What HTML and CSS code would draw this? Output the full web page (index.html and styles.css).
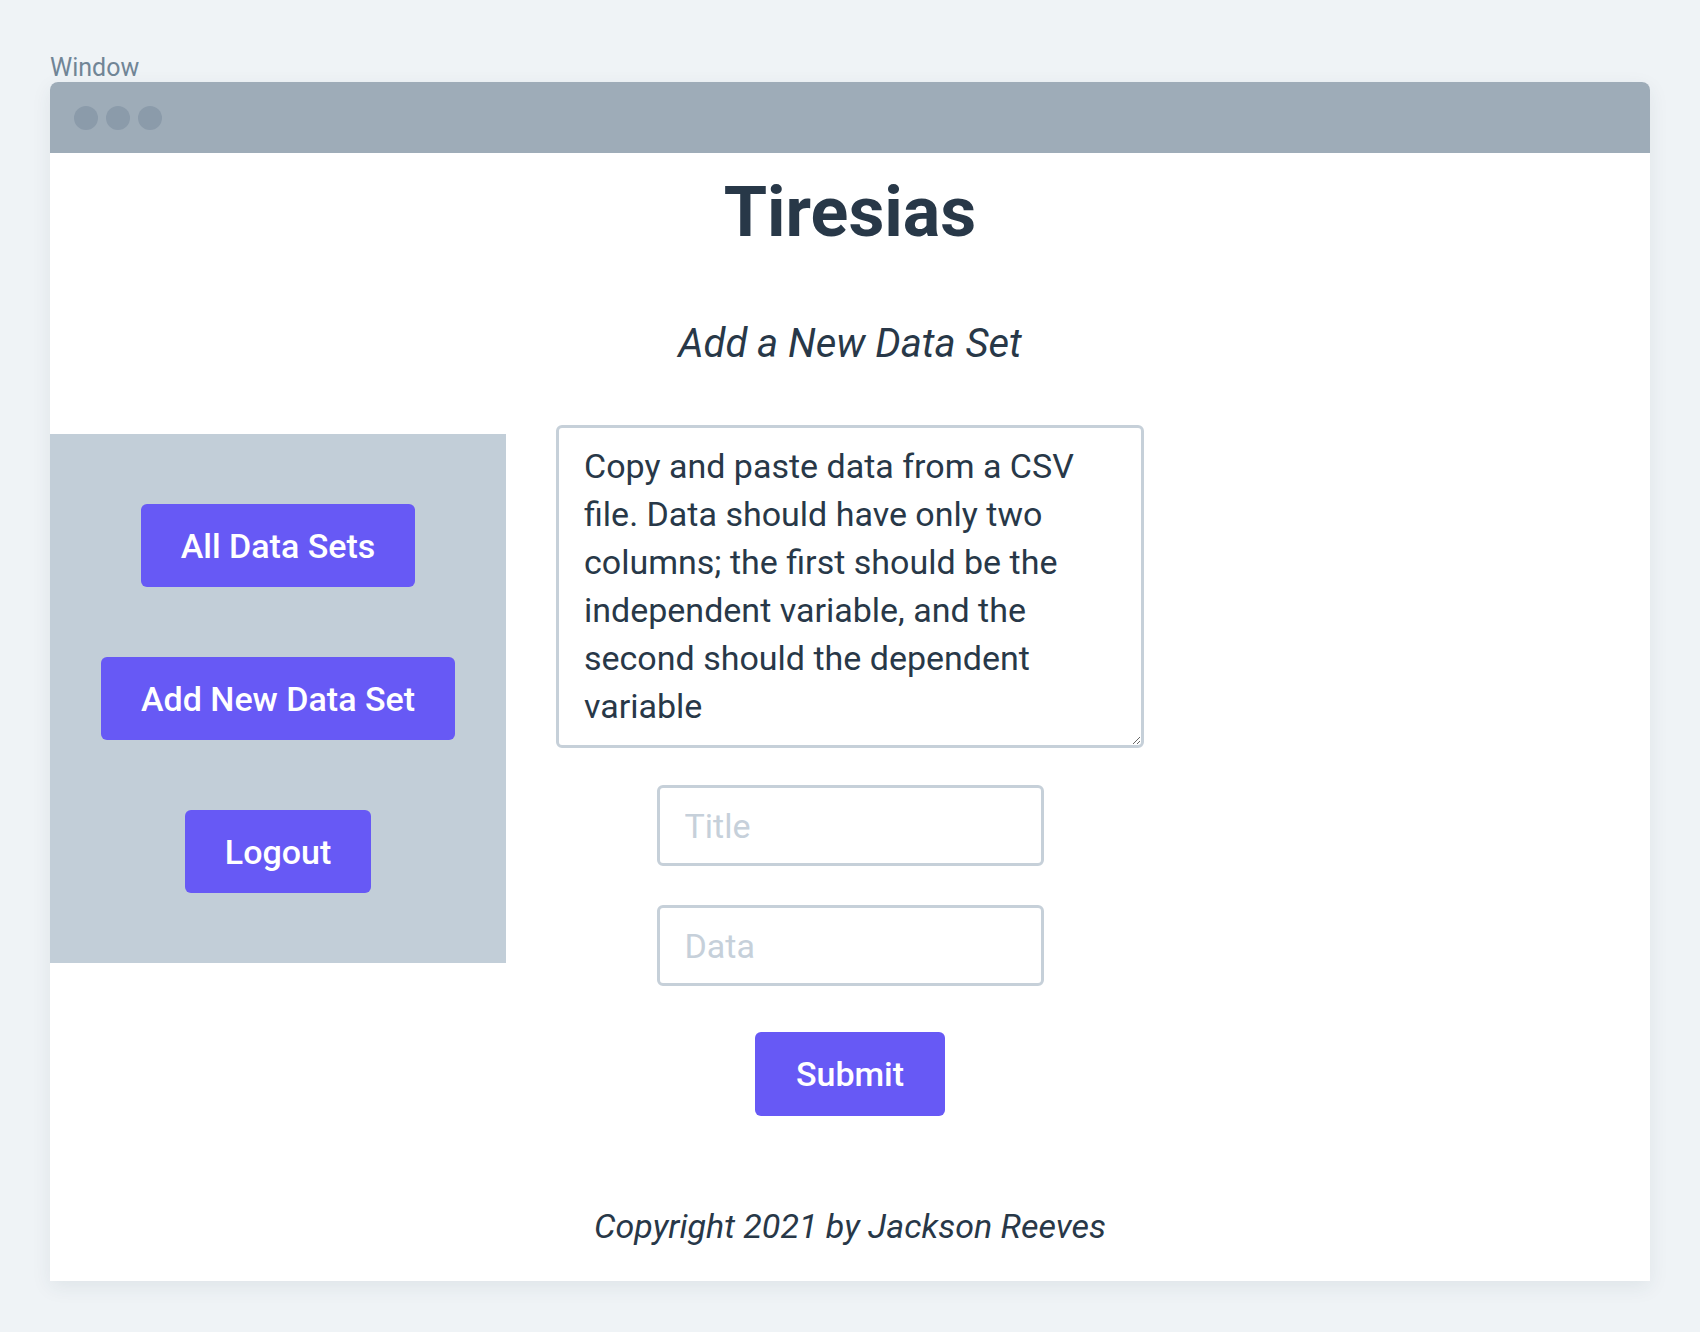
FILE: index.html
```html
<!DOCTYPE html>
<html lang="en">
<head>
<meta charset="utf-8">
<title>Tiresias</title>
<link rel="stylesheet" href="styles.css">
</head>
<body>
<div class="page">
  <div class="label">Window</div>
  <div class="window">
    <div class="titlebar">
      <span class="dot"></span><span class="dot"></span><span class="dot"></span>
    </div>
    <div class="content">
      <h1 class="title">Tiresias</h1>
      <h2 class="subtitle">Add a New Data Set</h2>
      <div class="main">
        <nav class="sidebar">
          <button class="btn">All Data Sets</button>
          <button class="btn">Add New Data Set</button>
          <button class="btn">Logout</button>
        </nav>
        <form class="form">
          <textarea class="area">Copy and paste data from a CSV file. Data should have only two columns; the first should be the independent variable, and the second should the dependent variable</textarea>
          <input class="field field-title" type="text" placeholder="Title">
          <input class="field field-data" type="text" placeholder="Data">
          <button class="btn submit" type="button">Submit</button>
        </form>
      </div>
      <footer class="footer">Copyright 2021 by Jackson Reeves</footer>
    </div>
  </div>
</div>
</body>
</html>
```
FILE: styles.css
```css
* { box-sizing: border-box; }
html, body { margin: 0; padding: 0; }
body {
  background: #eff3f6;
  font-family: Roboto, "Noto Sans", sans-serif;
  color: #283848;
  width: 1700px;
  height: 1332px;
  overflow: hidden;
}
.page {
  padding: 55px 50px 0;
}
.label {
  font-size: 25px;
  line-height: 25px;
  height: 25px;
  color: #718596;
  margin-bottom: 2px;
}
.window {
  width: 1600px;
  background: #ffffff;
  border-radius: 8px 8px 0 0;
  box-shadow: 0 6px 20px rgba(40, 60, 80, 0.08);
}
.titlebar {
  height: 71px;
  background: #9eacb8;
  border-radius: 8px 8px 0 0;
  display: flex;
  align-items: center;
  gap: 8px;
  padding-left: 24px;
}
.dot {
  width: 24px;
  height: 24px;
  border-radius: 50%;
  background: #8b9baa;
}
.content {
  height: 1128px;
  padding-top: 24px;
  display: flex;
  flex-direction: column;
  align-items: center;
}
.title {
  margin: 0;
  font-size: 70px;
  line-height: 70px;
  font-weight: 700;
}
.subtitle {
  margin: 77px 0 0;
  font-size: 40px;
  line-height: 40px;
  font-weight: 400;
  font-style: italic;
}
.main {
  margin-top: 61px;
  width: 100%;
  display: grid;
  grid-template-columns: 456px 1fr 456px;
  align-items: start;
}
.sidebar {
  margin-top: 9px;
  background: #c2ced8;
  padding: 70px 0;
  display: flex;
  flex-direction: column;
  align-items: center;
  gap: 70px;
}
.btn {
  font-family: Roboto, "Noto Sans", sans-serif;
  font-size: 34px;
  font-weight: 500;
  color: #ffffff;
  background: #6759f5;
  border: none;
  border-radius: 6px;
  height: 83px;
  padding: 0 40px;
  cursor: pointer;
}
.form {
  display: flex;
  flex-direction: column;
  align-items: center;
}
.area {
  width: 588px;
  height: 323px;
  border: 3px solid #c6d0d9;
  border-radius: 6px;
  padding: 14px 25px;
  font-family: Roboto, "Noto Sans", sans-serif;
  font-size: 34px;
  line-height: 48px;
  color: #283848;
  resize: vertical;
  overflow: hidden;
}
.field {
  width: 387px;
  height: 81px;
  border: 3px solid #c6d0d9;
  border-radius: 6px;
  padding: 0 25px;
  font-family: Roboto, "Noto Sans", sans-serif;
  font-size: 34px;
  color: #283848;
}
.field::placeholder { color: #c6d0da; }
.field-title { margin-top: 37px; }
.field-data { margin-top: 39px; }
.submit {
  margin-top: 46px;
  height: 84px;
  padding: 0 41px;
}
.footer {
  margin-top: auto;
  margin-bottom: 38px;
  font-size: 34px;
  line-height: 34px;
  font-style: italic;
}
```
